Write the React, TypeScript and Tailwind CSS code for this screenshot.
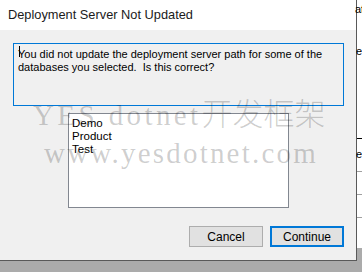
export default function App() {
  const items = ['Demo', 'Product', 'Test'];

  return (
    <div className="relative flex h-[272px] w-[362px] overflow-hidden bg-[#ababab] font-['Liberation_Sans',Arial,sans-serif]">
      {/* Dialog */}
      <div className="flex h-[261px] w-[357px] shrink-0 flex-col border-r border-b border-[#595959] bg-[#f0f0f0]">
        <div className="flex h-[30px] items-center bg-white pl-[8px] text-[12.8px] text-[#1a1a1a]">
          Deployment Server Not Updated
        </div>

        <div className="flex flex-col">
          {/* Message box */}
          <div className="relative mt-[13px] ml-[13px] h-[63px] w-[331px] px-[5px] pt-[5px] text-[11px] leading-[13px] text-black ring-1 ring-[#0078d7] ring-inset">
            <span className="absolute top-[3px] left-[6px] h-[11px] w-px bg-black" />
            You did not update the deployment server path for some of the databases you selected.&nbsp; Is this correct?
          </div>

          {/* List */}
          <div className="mt-[7px] ml-[68px] h-[95px] w-[221px] border border-[#828790] bg-white px-[3px] pt-[3px] text-[11.5px] leading-[13px] text-black">
            {items.map((it) => (
              <div key={it}>{it}</div>
            ))}
          </div>

          {/* Buttons */}
          <div className="mt-[18px] flex gap-[7px] pl-[189px] text-[12px] text-black">
            <button className="flex h-[21px] w-[74px] items-center justify-center border border-[#adadad] bg-[#e1e1e1]">
              Cancel
            </button>
            <button className="flex h-[21px] w-[74px] items-center justify-center border-2 border-[#0078d7] bg-[#e1e1e1]">
              Continue
            </button>
          </div>
        </div>
      </div>

      {/* Window behind */}
      <div className="flex h-[248px] flex-1 flex-col bg-white text-[11px] leading-[13px] text-black">
        <div className="-ml-[2px] pt-[3px]">at</div>
        <div className="-ml-[1px] mt-[29px]">e</div>
        <div className="mt-[80px] h-px bg-black" />
        <div className="-ml-[1px] mt-[9px]">e</div>
        <div className="mt-[10px] h-px bg-[#a0a0a0]" />
        <div className="mt-[22px] h-px bg-[#a0a0a0]" />
        <div className="mt-[22px] h-px bg-[#a0a0a0]" />
      </div>

      {/* Watermark */}
      <div className="pointer-events-none absolute top-[96px] left-[33px] leading-[32px] whitespace-nowrap text-black/20">
        <div className="flex items-baseline">
          <span className="font-['Liberation_Serif',serif] text-[29px] tracking-[3.4px] whitespace-pre">YES dotnet</span>
          <span className="font-['Noto_Sans_CJK_SC',sans-serif] text-[31px] font-light">开发框架</span>
        </div>
        <div className="mt-[6px] ml-[11px] font-['Liberation_Serif',serif] text-[29px] tracking-[2.2px]">www.yesdotnet.com</div>
      </div>
    </div>
  );
}
